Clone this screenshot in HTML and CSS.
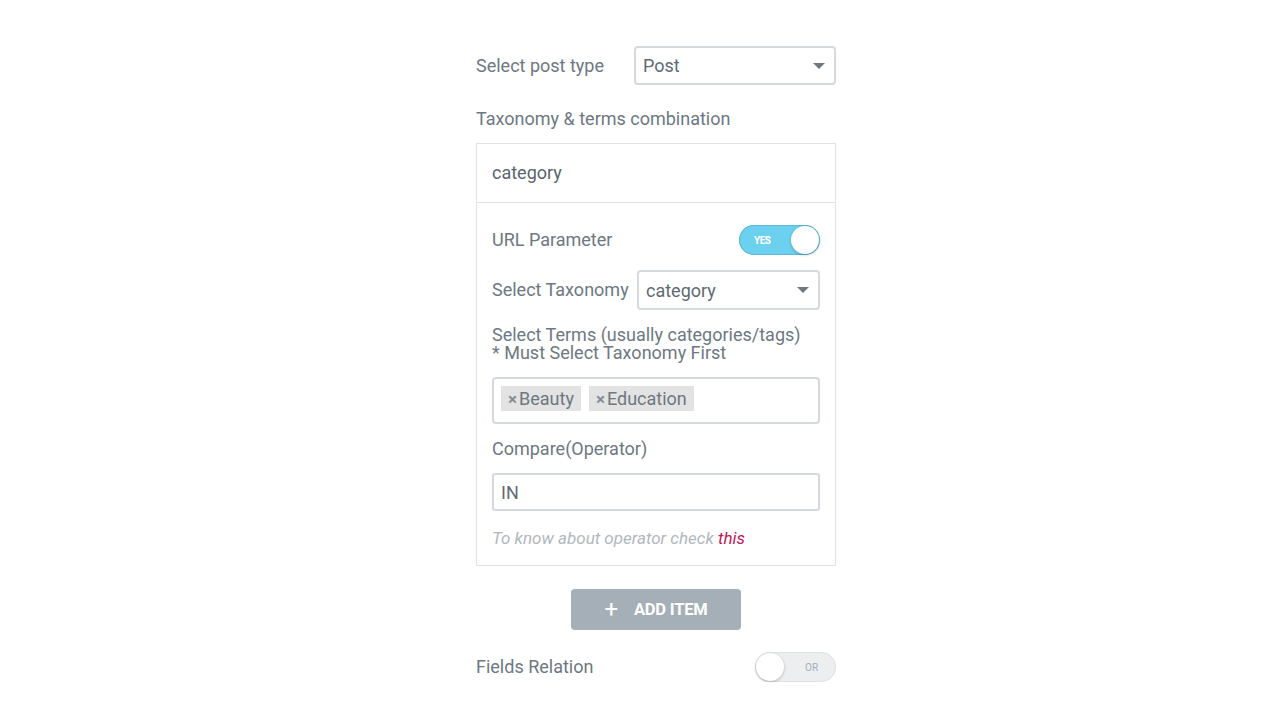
FILE: index.html
```html
<!DOCTYPE html>
<html>
<head>
<meta charset="utf-8">
<link rel="stylesheet" href="styles.css">
</head>
<body>
<div class="panel">
  <div class="row row-post">
    <span class="label">Select post type</span>
    <div class="select select-post"><span>Post</span><i class="caret"></i></div>
  </div>
  <div class="section-label">Taxonomy &amp; terms combination</div>
  <div class="repeater">
    <div class="rep-title">category</div>
    <div class="rep-body">
      <div class="row row-toggle">
        <span class="label">URL Parameter</span>
        <div class="switch on"><span class="sw-text">YES</span><span class="knob"></span></div>
      </div>
      <div class="row row-tax">
        <span class="label">Select Taxonomy</span>
        <div class="select select-tax"><span>category</span><i class="caret"></i></div>
      </div>
      <div class="multi-label"><div>Select Terms (usually categories/tags)</div><div>* Must Select Taxonomy First</div></div>
      <div class="tags">
        <span class="tag"><span class="x">×</span>Beauty</span>
        <span class="tag"><span class="x">×</span>Education</span>
      </div>
      <div class="block-label">Compare(Operator)</div>
      <div class="input">IN</div>
      <div class="note">To know about operator check <a class="link">this</a></div>
    </div>
  </div>
  <div class="btn-wrap">
    <button class="add-btn"><span class="plus">+</span>ADD ITEM</button>
  </div>
  <div class="row row-rel">
    <span class="label">Fields Relation</span>
    <div class="switch off"><span class="knob"></span><span class="sw-text">OR</span></div>
  </div>
</div>
</body>
</html>
```
FILE: styles.css
```css
* { box-sizing: border-box; }
html, body { margin: 0; padding: 0; background: #fff; }
body { font-family: Roboto, "Noto Sans", sans-serif; color: #6d7882; font-size: 18px; }
.panel { width: 360px; margin-left: 476px; padding-top: 46px; }
.row { display: flex; align-items: center; justify-content: space-between; }
.label { line-height: 22px; color: #6d7882; }
.select { position: relative; border: 2px solid #d5dadf; border-radius: 4px; display: flex; align-items: center; padding-left: 7px; color: #5f6a73; background: #fff; }
.select-post { width: 202px; height: 39px; }
.select-tax { width: 183px; height: 40px; }
.caret { position: absolute; right: 9px; top: 50%; margin-top: -3px; width: 0; height: 0; border-left: 6px solid transparent; border-right: 6px solid transparent; border-top: 6px solid #6d7882; }
.section-label { margin-top: 23px; line-height: 22px; margin-bottom: 13px; }
.repeater { border: 1px solid #e0e3e6; }
.rep-title { height: 58px; padding-left: 15px; padding-bottom: 2px; display: flex; align-items: center; color: #5a646d; }
.rep-body { border-top: 1px solid #e0e3e6; padding: 22px 15px 16px 15px; }
.row-toggle { height: 30px; }
.switch { position: relative; width: 81px; height: 30px; border-radius: 15px; display: flex; align-items: center; }
.switch.on { background: #6cd1ef; box-shadow: inset 0 0 0 1px #5ab7d6; }
.switch.on .sw-text { color: #fff; font-size: 10px; font-weight: 700; margin-left: 15px; letter-spacing: -0.5px; }
.switch .knob { position: absolute; top: 1px; width: 28px; height: 28px; border-radius: 50%; background: #fff; box-shadow: 0 1px 3px rgba(0,0,0,0.25); }
.switch.on .knob { right: 1px; }
.switch.off { background: #eceeef; box-shadow: inset 0 0 0 1px #dfe2e4; }
.switch.off .knob { left: 1px; }
.switch.off .sw-text { color: #a4afb7; font-size: 10px; margin-left: 50px; }
.row-tax { margin-top: 15px; }
.multi-label { margin-top: 16px; line-height: 18px; }
.tags { margin-top: 15px; height: 47px; border: 2px solid #d5dadf; border-radius: 4px; padding: 7px 0 0 7px; display: flex; gap: 8px; align-items: flex-start; }
.tag { background: #e3e3e3; height: 25px; line-height: 25px; padding: 0 7px 0 7px; color: #6d7882; font-size: 18px; }
.tag .x { font-size: 17px; color: #858e96; margin-right: 2px; font-weight: 700; }
.block-label { margin-top: 14px; line-height: 22px; }
.input { margin-top: 13px; height: 38px; border: 2px solid #d5dadf; border-radius: 3px; padding-left: 7px; display: flex; align-items: center; color: #5f6a73; }
.note { margin-top: 16px; line-height: 22px; font-style: italic; color: #b0b8be; font-size: 17px; }
.link { color: #c3185a; }
.btn-wrap { display: flex; justify-content: center; margin-top: 23px; }
.add-btn { width: 170px; height: 41px; border: 0; border-radius: 4px; background: #a4afb7; color: #fff; font-family: Roboto, sans-serif; font-weight: 700; font-size: 16.5px; display: flex; align-items: center; justify-content: center; padding: 0; letter-spacing: -0.2px; }
.plus { font-size: 24px; font-weight: 400; margin-right: 16px; line-height: 1; position: relative; top: -1px; }
.row-rel { margin-top: 22px; height: 30px; }
```
